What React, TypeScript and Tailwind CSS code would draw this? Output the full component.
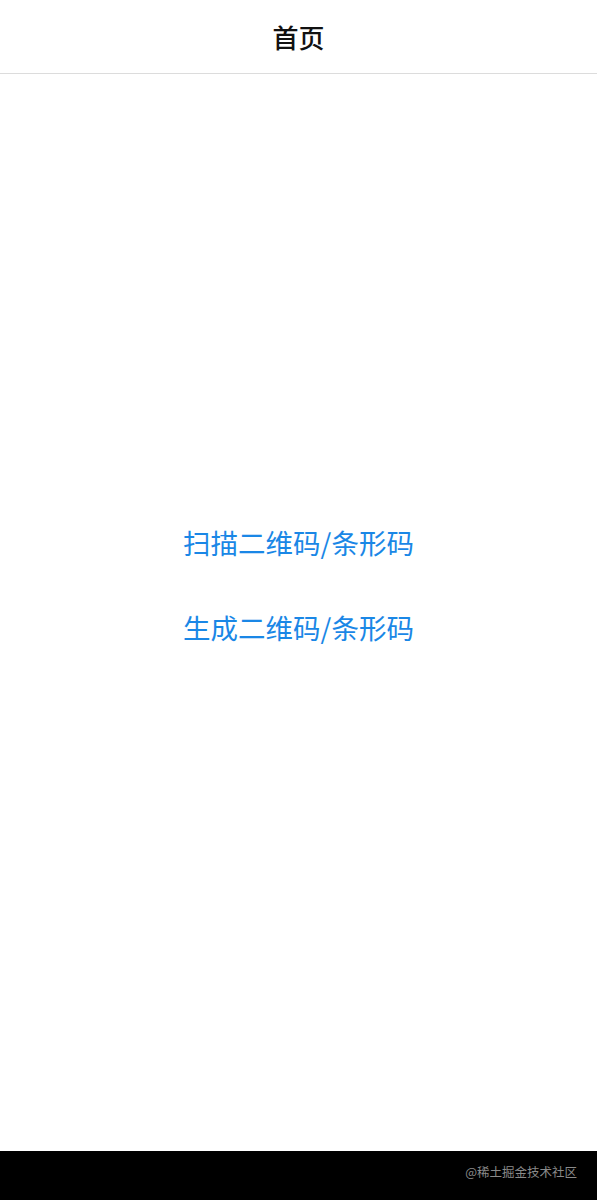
export default function App() {
  const font = { fontFamily: '"Noto Sans CJK SC", "Noto Sans", sans-serif' };
  return (
    <div className="flex h-[1200px] w-full flex-col bg-white" style={font}>
      {/* Header */}
      <header className="flex h-[74px] shrink-0 items-center justify-center border-b border-[#dcdcdc]">
        <h1 className="text-[26px] font-medium text-[#111111]">首页</h1>
      </header>

      {/* Actions */}
      <main className="flex flex-1 flex-col items-center pt-[426px]">
        <button className="flex h-[85px] items-center text-[27.5px] text-[#1a87e6]">
          扫描二维码/条形码
        </button>
        <button className="flex h-[85px] items-center text-[27.5px] text-[#1a87e6]">
          生成二维码/条形码
        </button>
      </main>

      {/* Bottom bar */}
      <footer className="flex h-[49px] shrink-0 items-center justify-end bg-black pr-[20px] pb-[6px]">
        <span className="text-[12.5px] text-[#8a8a8a]">@稀土掘金技术社区</span>
      </footer>
    </div>
  );
}
